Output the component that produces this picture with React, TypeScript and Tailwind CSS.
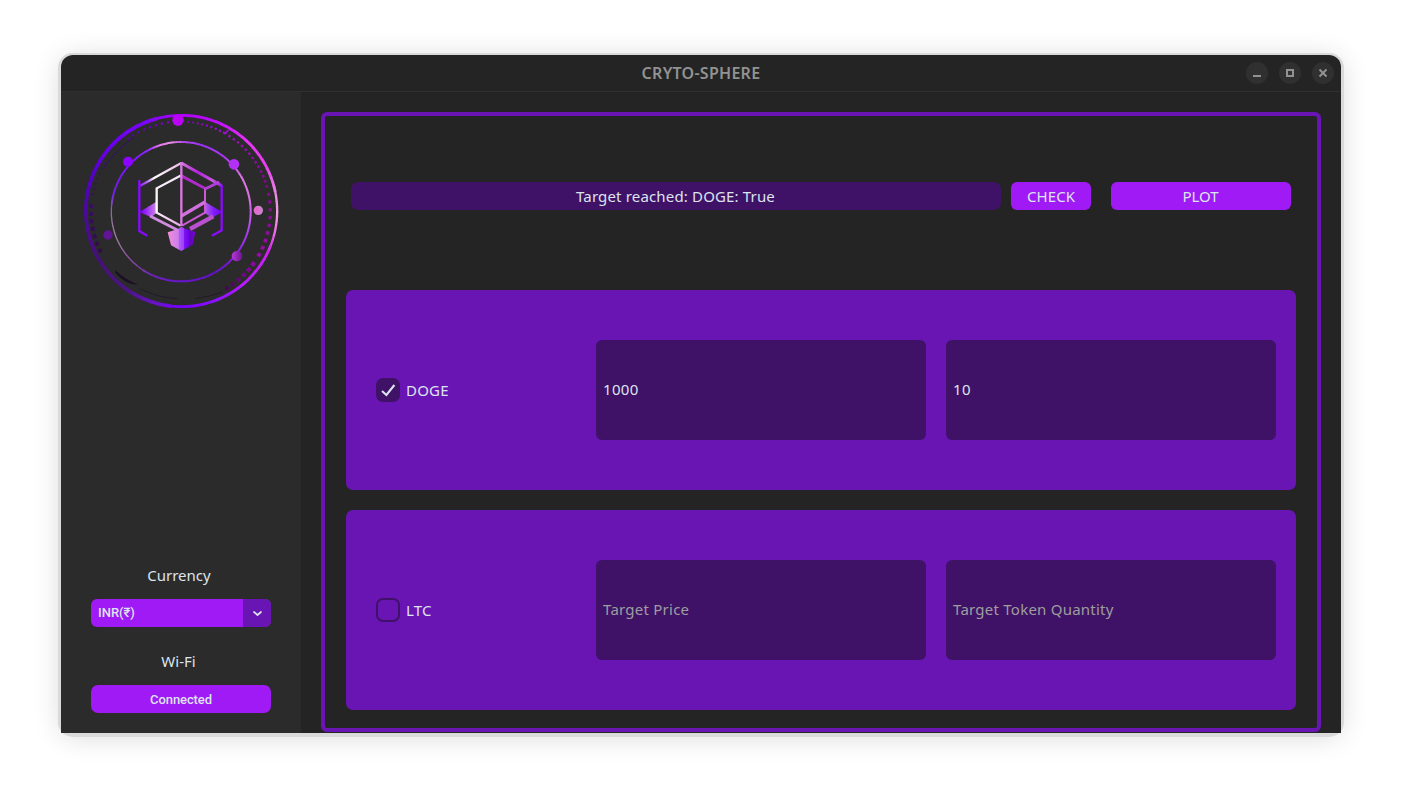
import React from "react";

type Stop = [number, string];

const OUTER: Stop[] = [
  [0, "#b000f8"], [20, "#c00cff"], [45, "#e835f5"], [62, "#e840ec"], [80, "#ee88e4"], [92, "#f0a0e0"],
  [102, "#ee70e4"], [115, "#d020f0"], [140, "#b41cff"], [160, "#8a10ff"], [180, "#7600ff"], [195, "#6a14c8"],
  [215, "#4c1484"], [240, "#461078"], [265, "#4a0c96"], [290, "#5400c4"], [315, "#6c00f0"], [340, "#7c08f8"], [360, "#b000f8"],
];

const INNER: Stop[] = [
  [0, "#b850e8"], [15, "#a030f8"], [40, "#a838f0"], [60, "#d878e0"], [80, "#dc70e4"], [100, "#b850f0"], [125, "#8a20e0"],
  [150, "#6412c8"], [180, "#6a14d0"], [205, "#6a24b0"], [225, "#8c4ca4"], [250, "#a0809c"], [270, "#88689c"],
  [285, "#7020e0"], [315, "#8010ff"], [332, "#8c28ff"], [342, "#e878e8"], [352, "#e890e0"], [360, "#b850e8"],
];

function mix(stops: Stop[], deg: number): string {
  let i = 1;
  while (i < stops.length - 1 && stops[i][0] < deg) i++;
  const [a, ca] = stops[i - 1];
  const [b, cb] = stops[i];
  const t = (deg - a) / (b - a);
  const ch = (c: string, k: number) => parseInt(c.slice(k, k + 2), 16);
  const v = [1, 3, 5].map((k) => Math.round(ch(ca, k) + (ch(cb, k) - ch(ca, k)) * t));
  return `rgb(${v.join(",")})`;
}

function polar(cx: number, cy: number, r: number, deg: number): string {
  const a = (deg * Math.PI) / 180;
  return `${(cx + r * Math.sin(a)).toFixed(2)} ${(cy - r * Math.cos(a)).toFixed(2)}`;
}

function Ring({ cx, cy, r, stops, width }: { cx: number; cy: number; r: number; stops: Stop[]; width: (d: number) => number }) {
  return (
    <g fill="none">
      {Array.from({ length: 120 }, (_, i) => {
        const d = i * 3;
        return (
          <path
            key={d}
            d={`M${polar(cx, cy, r, d)}A${r} ${r} 0 0 1 ${polar(cx, cy, r, d + 3.4)}`}
            stroke={mix(stops, d + 1.5)}
            strokeWidth={width(d)}
          />
        );
      })}
    </g>
  );
}

interface Dashes { from: number; to: number; step: number; size: [number, number]; color: [string, string] }

const DASHES: Dashes[] = [
  { from: 5, to: 30, step: 3, size: [5, 7], color: ["#8a00c8", "#a010d8"] },
  { from: 33, to: 76, step: 3.4, size: [7, 8], color: ["#a010c0", "#800888"] },
  { from: 79, to: 122, step: 5, size: [9, 12], color: ["#880890", "#980ca8"] },
  { from: 126, to: 153, step: 4.6, size: [13, 11], color: ["#8a08a0", "#3a0a48"] },
  { from: 244, to: 278, step: 4.9, size: [12, 12], color: ["#300c48", "#3c0c68"] },
  { from: 281, to: 304, step: 3.5, size: [6, 4], color: ["#3a0c60", "#38106a"] },
  { from: 324, to: 355, step: 4, size: [6, 7], color: ["#5a00b0", "#8400d0"] },
];

function Logo() {
  return (
    <svg className="block h-[210px] w-[212px]" viewBox="0 0 636 630">
      <defs>
        <linearGradient id="hexLeft" gradientUnits="userSpaceOnUse" x1="190" y1="0" x2="316" y2="0">
          <stop offset="0" stopColor="#8a10ff" />
          <stop offset=".2" stopColor="#b870ec" />
          <stop offset=".35" stopColor="#ffffff" />
          <stop offset="1" stopColor="#e8b8e4" />
        </linearGradient>
        <linearGradient id="hexRight" gradientUnits="userSpaceOnUse" x1="316" y1="0" x2="440" y2="0">
          <stop offset="0" stopColor="#d478dc" />
          <stop offset=".4" stopColor="#b420e0" />
          <stop offset=".75" stopColor="#c858dc" />
          <stop offset="1" stopColor="#8c18f0" />
        </linearGradient>
        <linearGradient id="inLeft" gradientUnits="userSpaceOnUse" x1="300" y1="210" x2="290" y2="360">
          <stop offset="0" stopColor="#f4e8f8" />
          <stop offset=".7" stopColor="#ffffff" />
          <stop offset="1" stopColor="#e4a0e0" />
        </linearGradient>
        <linearGradient id="wingL" gradientUnits="userSpaceOnUse" x1="196" y1="0" x2="240" y2="0">
          <stop offset="0" stopColor="#7a00ff" />
          <stop offset="1" stopColor="#cc80e0" />
        </linearGradient>
        <linearGradient id="wingR" gradientUnits="userSpaceOnUse" x1="388" y1="0" x2="436" y2="0">
          <stop offset="0" stopColor="#b060e0" />
          <stop offset=".5" stopColor="#8020f8" />
          <stop offset="1" stopColor="#7a00ff" />
        </linearGradient>
        <linearGradient id="gem" gradientUnits="userSpaceOnUse" x1="276" y1="0" x2="358" y2="0">
          <stop offset="0" stopColor="#f08cd8" />
          <stop offset=".38" stopColor="#cc80ec" />
          <stop offset=".4" stopColor="#b45cf4" />
          <stop offset=".58" stopColor="#9840ff" />
          <stop offset=".6" stopColor="#7c14f0" />
          <stop offset=".78" stopColor="#6c00e8" />
          <stop offset=".8" stopColor="#5c08b0" />
          <stop offset="1" stopColor="#7c00e0" />
        </linearGradient>
        <radialGradient id="pinkDot" cx=".3" cy=".5" r=".8">
          <stop offset="0" stopColor="#f060d0" />
          <stop offset="1" stopColor="#b890c8" />
        </radialGradient>
        <linearGradient id="duskDot">
          <stop offset="0" stopColor="#b838d8" />
          <stop offset="1" stopColor="#6c1490" />
        </linearGradient>
      </defs>

      <Ring cx={316.5} cy={315} r={287} stops={OUTER} width={(d) => (d > 185 && d < 345 ? 11 : d > 75 && d < 110 ? 7 : 8.5)} />
      <Ring cx={315} cy={317} r={209} stops={INNER} width={(d) => (d > 210 && d < 275 ? 4 : 6)} />

      {DASHES.map((g) =>
        Array.from({ length: Math.floor((g.to - g.from) / g.step) + 1 }, (_, i) => {
          const d = g.from + i * g.step;
          const t = (d - g.from) / (g.to - g.from);
          const s = g.size[0] + (g.size[1] - g.size[0]) * t;
          return (
            <rect
              key={d}
              x={-s / 2}
              y={-s / 2}
              width={s}
              height={s}
              fill={mix([[0, g.color[0]], [1, g.color[1]]], t)}
              transform={`translate(${polar(314, 316, 269, d)}) rotate(${d})`}
            />
          );
        })
      )}
      <path d="M447 84L457 72" stroke="#a010d8" strokeWidth="5" />
      <path d="M82 188Q118 132 176 92" stroke="#32106a" strokeWidth="3" fill="none" />
      <path d="M118 492Q140 516 186 536Q148 536 118 500Z" fill="#1c0e24" />
      <path d="M190 548Q250 576 304 578M358 578Q404 572 440 558" stroke="#231a2a" strokeWidth="3" fill="none" />

      <circle cx="306" cy="43" r="17" fill="#bc04f4" />
      <circle cx="156" cy="167" r="15" fill="#8c04ff" />
      <circle cx="474" cy="175" r="16" fill="#b430f4" />
      <circle cx="547" cy="313" r="14" fill="url(#pinkDot)" />
      <circle cx="483" cy="450" r="16" fill="url(#duskDot)" />
      <circle cx="96" cy="387" r="14" fill="#611595" />

      <path d="M190 318L240 288V322L226 334Z" fill="url(#wingL)" />
      <path d="M388 288L438 318L408 336L388 322Z" fill="url(#wingR)" />
      <g fill="none" strokeWidth="6">
        <path d="M316 171L191 240" stroke="url(#hexLeft)" strokeWidth="7" />
        <path d="M316 171L437 239" stroke="url(#hexRight)" strokeWidth="9" />
        <path d="M190 222V375L214 389" stroke="#8a08ff" strokeWidth="7" />
        <path d="M437 237V373L408 389" stroke="#8a0cfa" strokeWidth="7" />
        <path d="M316 208L242 247V320L314 359" stroke="url(#inLeft)" strokeWidth="7" />
        <path d="M316 208L387 247V320L318 359" stroke="#cc58d8" />
        <path d="M316 210L387 247" stroke="#b028cc" strokeWidth="8" />
        <path d="M387 249L430 228" stroke="#b040d8" strokeWidth="8" />
        <path d="M316 330L387 288" stroke="#d070dc" strokeWidth="10" />
        <path d="M316 168V360" stroke="#d878e0" strokeWidth="7" />
        <path d="M222 330L310 375" stroke="#d08ce0" strokeWidth="8" />
        <path d="M244 330L316 369L388 330" stroke="#2b2b2b" strokeWidth="4" />
        <path d="M342 369L412 331" stroke="#b850d0" strokeWidth="13" />
      </g>
      <path d="M275 379L306 369L316 362L328 368L358 378L350 416L316 435L285 418Z" fill="url(#gem)" />
    </svg>
  );
}

function WindowButton({ children }: { children: React.ReactNode }) {
  return (
    <button className="flex size-[22px] items-center justify-center rounded-full bg-[#303030]">
      <svg className="size-[22px]" viewBox="0 0 22 22" fill="none" stroke="#929292" strokeWidth="2">
        {children}
      </svg>
    </button>
  );
}

function CoinRow({ name, checked, price, quantity }: { name: string; checked?: boolean; price?: string; quantity?: string }) {
  return (
    <div className="flex h-[200px] items-center rounded-[7px] bg-[#6915b4] pr-5 pl-[30px]">
      <div className="flex w-[220px] items-center gap-1.5">
        {checked ? (
          <span className="flex size-6 items-center justify-center rounded-[7px] bg-[#3f1267]">
            <svg className="size-6" viewBox="0 0 24 24" fill="none" stroke="#dce4ee" strokeWidth="2.1">
              <path d="M6 13L10.4 17L18.4 7" />
            </svg>
          </span>
        ) : (
          <span className="size-6 rounded-[7px] border-2 border-[#3f1267]" />
        )}
        <span className="leading-5 tracking-[0.2px]">{name}</span>
      </div>
      <div className="flex flex-1 gap-5 tracking-[0.24px]">
        <div className="flex h-[100px] flex-1 items-center rounded-md bg-[#3f1267] px-[7px] pb-0.5">
          <span className={price ? "tracking-[0.3px]" : "text-[#9e9e9e]"}>{price ?? "Target Price"}</span>
        </div>
        <div className="flex h-[100px] flex-1 items-center rounded-md bg-[#3f1267] px-[7px] pb-0.5">
          <span className={quantity ? "tracking-[0.3px]" : "text-[#9e9e9e]"}>{quantity ?? "Target Token Quantity"}</span>
        </div>
      </div>
    </div>
  );
}

export default function App() {
  return (
    <div className="h-[800px] w-[1402px] overflow-hidden bg-white px-[61px] pt-[55px] font-['Noto_Sans',sans-serif] text-[15px] text-[#dce4ee]">
      <div className="h-[678px] w-[1280px] rounded-xl shadow-[0_0_0_2px_#d9dbda,0_1px_0_3px_#dadada,0_3px_28px_rgba(0,0,0,0.16)]">
        <div className="flex h-full flex-col overflow-hidden rounded-t-xl bg-[#242424]">
          <header className="grid h-[37px] shrink-0 grid-cols-[1fr_auto_1fr] items-center border-b border-[#303030] px-[7px]">
            <h1 className="col-start-2 text-[16px] font-semibold tracking-[0.27px] text-[#929292]">CRYTO-SPHERE</h1>
            <div className="flex justify-end gap-[11px]">
              <WindowButton><path d="M7 14H15" /></WindowButton>
              <WindowButton><path d="M8 8H14V14H8Z" /></WindowButton>
              <WindowButton><path d="M7.5 7.5L14.5 14.5M14.5 7.5L7.5 14.5" /></WindowButton>
            </div>
          </header>

          <div className="flex min-h-0 flex-1">
            <aside className="flex w-60 flex-col bg-[#2b2b2b]">
              <div className="pt-3.5 pl-[15px]"><Logo /></div>
              <div className="mt-auto flex flex-col px-[30px] pb-5">
                <label className="mb-[13px] pr-1 text-center leading-[22px]">Currency</label>
                <button className="flex h-7 overflow-hidden rounded-md bg-[#9f1af5] font-[Roboto,sans-serif] text-[13px] font-medium">
                  <span className="flex-1 pl-[7px] text-left leading-[27px]">INR(₹)</span>
                  <span className="flex h-7 w-7 items-center justify-center bg-[#6915b4]">
                    <svg className="h-7 w-7" viewBox="0 0 28 28" fill="none" stroke="#dce4ee" strokeWidth="1.7" strokeLinecap="round" strokeLinejoin="round">
                      <path d="M11 13L14.5 16L18 13" />
                    </svg>
                  </span>
                </button>
                <label className="mt-[23px] mb-[13px] pr-[5px] text-center leading-[22px]">Wi-Fi</label>
                <button className="h-7 rounded-[7px] bg-[#9f1af5] font-[Roboto,sans-serif] text-[13px] leading-[27px] font-medium tracking-[-0.1px]">Connected</button>
              </div>
            </aside>

            <main className="flex-1 px-5 pt-5 pb-[1px]">
              <section className="flex h-full flex-col rounded-md border-4 border-[#6915b4] px-[21px]">
                <div className="mt-[66px] flex h-7 shrink-0 px-[5px]">
                  <div className="flex w-[650px] items-center justify-center rounded-[7px] bg-[#3f1267] pr-px tracking-[0.16px]">Target reached: DOGE: True</div>
                  <button className="ml-2.5 w-20 rounded-md bg-[#9f1af5] tracking-[0.1px]">CHECK</button>
                  <button className="ml-5 flex-1 rounded-md bg-[#9f1af5] pr-px">PLOT</button>
                </div>
                <div className="mt-20 flex flex-col gap-5">
                  <CoinRow name="DOGE" checked price="1000" quantity="10" />
                  <CoinRow name="LTC" />
                </div>
              </section>
            </main>
          </div>
        </div>
      </div>
    </div>
  );
}
